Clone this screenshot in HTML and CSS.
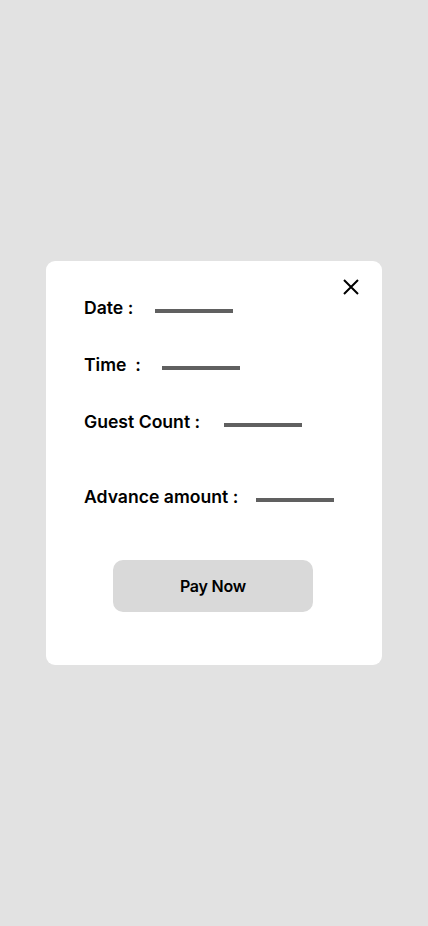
FILE: index.html
```html
<!DOCTYPE html>
<html>
<head>
<meta charset="utf-8">
<link rel="stylesheet" href="styles.css">
</head>
<body>
<div class="screen">
  <div class="card">
    <button class="close" aria-label="Close">
      <svg width="16" height="16" viewBox="0 0 16 16"><path d="M1 1L15 15M15 1L1 15" stroke="#000" stroke-width="2" fill="none"/></svg>
    </button>
    <div class="row r1"><span class="label">Date :</span><span class="blank g-date"></span></div>
    <div class="row r2"><span class="label">Time&nbsp; :</span><span class="blank g-time"></span></div>
    <div class="row r3"><span class="label">Guest Count :</span><span class="blank g-guest"></span></div>
    <div class="row r4"><span class="label">Advance amount :</span><span class="blank g-adv"></span></div>
    <div class="actions"><button class="pay">Pay Now</button></div>
  </div>
</div>
</body>
</html>
```
FILE: styles.css
```css
html, body {
  margin: 0;
  padding: 0;
  background: #e2e2e2;
  font-family: Inter, "Noto Sans", sans-serif;
}
.screen {
  width: 428px;
  height: 926px;
  padding-top: 261px;
  box-sizing: border-box;
}
.card {
  position: relative;
  margin-left: 46px;
  width: 336px;
  height: 404px;
  background: #fff;
  border-radius: 9px;
  box-sizing: border-box;
  padding: 37px 0 0 38px;
}
.close {
  position: absolute;
  top: 18px;
  right: 23px;
  width: 16px;
  height: 16px;
  padding: 0;
  border: 0;
  background: none;
  display: block;
}
.close svg { display: block; }
.row {
  display: flex;
  align-items: center;
  height: 20px;
}
.r2, .r3 { margin-top: 37px; }
.r4 { margin-top: 55px; }
.label {
  font-size: 17.6px;
  font-weight: 600;
  color: #000;
  line-height: 20px;
  white-space: pre;
}
.blank {
  width: 78px;
  height: 4px;
  background: #606060;
  margin-top: 6px;
}
.g-date { margin-left: 22px; }
.g-time { margin-left: 21px; }
.g-guest { margin-left: 24px; }
.g-adv { margin-left: 18px; }
.actions {
  margin-top: 53px;
  margin-left: 29px;
}
.pay {
  width: 200px;
  height: 52px;
  border: 0;
  border-radius: 10px;
  background: #d9d9d9;
  font-family: Inter, "Noto Sans", sans-serif;
  font-size: 16px;
  font-weight: 600;
  letter-spacing: -0.2px;
  color: #000;
  padding: 0;
}
```
